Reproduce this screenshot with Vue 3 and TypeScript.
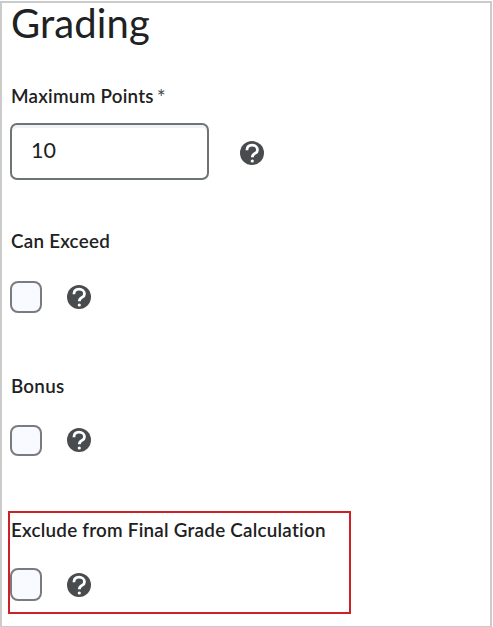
<script setup lang="ts">
import { ref } from 'vue'

interface Option {
  id: string
  label: string
  highlighted: boolean
}

const points = ref<string>('10')
const options: Option[] = [
  { id: 'exceed', label: 'Can Exceed', highlighted: false },
  { id: 'bonus', label: 'Bonus', highlighted: false },
  { id: 'exclude', label: 'Exclude from Final Grade Calculation', highlighted: true },
]
</script>

<template>
  <main class="panel">
    <h1 class="title">Grading</h1>
    <section class="points">
      <label class="label" for="points">Maximum Points<span class="required">*</span></label>
      <div class="row">
        <input id="points" v-model="points" class="field" type="text" />
        <svg class="help" viewBox="0 0 24 24">
          <circle cx="12" cy="12" r="12" />
          <path class="hook" d="M6.9 9.3C6.9 6.1 8.9 4.2 12 4.2s5.5 1.8 5.5 4.7c0 3.9-5.2 3.1-5.2 7.3" />
          <circle class="dot" cx="12.3" cy="20" r="1.6" />
        </svg>
      </div>
    </section>
    <section
      v-for="option in options"
      :key="option.id"
      class="option"
      :class="[option.id, { highlighted: option.highlighted }]"
    >
      <label class="label" :for="option.id">{{ option.label }}</label>
      <div class="row">
        <input :id="option.id" class="check" type="checkbox" />
        <svg class="help" viewBox="0 0 24 24">
          <circle cx="12" cy="12" r="12" />
          <path class="hook" d="M6.9 9.3C6.9 6.1 8.9 4.2 12 4.2s5.5 1.8 5.5 4.7c0 3.9-5.2 3.1-5.2 7.3" />
          <circle class="dot" cx="12.3" cy="20" r="1.6" />
        </svg>
      </div>
    </section>
  </main>
</template>

<style>
body {
  background: #fff;
}
</style>

<style scoped>
.panel {
  box-sizing: border-box;
  width: 492px;
  height: 626px;
  margin-top: 1px;
  padding-left: 8px;
  border: 2px solid #cbcbcb;
  border-bottom-width: 1px;
  background: #fff;
  color: #202122;
  font-family: Lato, "Liberation Sans", sans-serif;
}
.title {
  height: 45px;
  margin: 0 0 0 1px;
  font-size: 40px;
  font-weight: 400;
  letter-spacing: 0.1px;
  line-height: 40px;
}
.label {
  display: block;
  height: 24px;
  padding-left: 1px;
  font-size: 18.8px;
  font-weight: 600;
  font-variant-ligatures: none;
  letter-spacing: 0.25px;
  line-height: 24px;
  white-space: nowrap;
}
.required {
  display: inline-block;
  height: 20px;
  padding: 2px 0 0 3px;
  color: #494c4e;
  font-size: 21px;
  font-weight: 400;
  line-height: 22px;
  vertical-align: top;
}
.row {
  display: flex;
  align-items: center;
}
.points {
  height: 145px;
  margin-top: 36px;
}
.points .row {
  gap: 31px;
  margin-top: 15px;
}
.field {
  box-sizing: border-box;
  width: 199px;
  height: 57px;
  padding: 0 20px 4px 19px;
  border: 2px solid #6e7376;
  border-radius: 7px;
  background: #fff;
  box-shadow: inset 0 3px 0 #f2f2f4;
  color: #202122;
  font-family: Lato, "Liberation Sans", sans-serif;
  font-size: 21.5px;
}
.help {
  width: 24px;
  height: 24px;
  fill: #494c4e;
}
.points .help {
  margin-top: 3px;
}
.hook {
  fill: none;
  stroke: #fff;
  stroke-width: 2.8;
}
.dot {
  fill: #fff;
}
.option {
  box-sizing: border-box;
  height: 145px;
}
.option .row {
  gap: 25px;
  margin-top: 28px;
}
.bonus .row {
  margin-top: 27px;
}
.bonus .check {
  height: 31px;
}
.bonus .help {
  margin-top: -1px;
}
.check {
  appearance: none;
  box-sizing: border-box;
  width: 32px;
  height: 32px;
  margin: 0;
  border: 2px solid #797c7f;
  border-radius: 8px;
  background: #f9faff;
}
.highlighted {
  width: 343px;
  height: 103px;
  margin: -8px 0 0 -2px;
  padding-top: 5px;
  border: 2px solid #cd2027;
}
.highlighted .row {
  margin-top: 26px;
}
.highlighted .check {
  height: 33px;
}
.highlighted .help {
  margin-top: 1px;
}
</style>
